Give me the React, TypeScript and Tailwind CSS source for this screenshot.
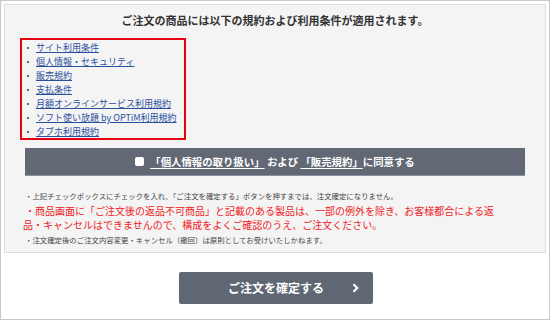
const FONT = "font-['Noto_Sans_CJK_JP','Noto_Sans',sans-serif]";

const terms = [
  "サイト利用条件",
  "個人情報・セキュリティ",
  "販売規約",
  "支払条件",
  "月額オンラインサービス利用規約",
  "ソフト使い放題 by OPTiM利用規約",
  "タブホ利用規約",
];

export default function App() {
  return (
    <div
      className={`${FONT} w-[550px] h-[320px] border border-[#c8c8c8] bg-white pt-[3px] px-[3px] overflow-hidden`}
    >
      <div className="h-[249px] border border-[#dddddd] bg-[#f4f4f4]">
        <h2 className="pt-[7px] text-center text-[11px] leading-[16px] font-bold text-[#333]">
          ご注文の商品には以下の規約および利用条件が適用されます。
        </h2>

        <div className="mt-[10px] ml-[15px] w-[166px] h-[102px] border-2 border-[#e50012] pl-[5px] pt-[1px]">
          <ul>
            {terms.map((t) => (
              <li key={t} className="flex items-center h-[14px] text-[9px] leading-[14px]">
                <span className="inline-block w-[2px] h-[2px] bg-[#666] mr-[7px]" />
                <a href="#" className="text-[#2a4f9c] underline underline-offset-1 whitespace-nowrap">
                  {t}
                </a>
              </li>
            ))}
          </ul>
        </div>

        <div className="mt-[8px] mx-[20px] h-[28px] bg-[#626975] border-b border-[#8a93a3] flex items-center justify-center">
          <label className="flex items-center gap-[6px] text-[10.4px] font-bold text-white">
            <span className="inline-block w-[9px] h-[9px] rounded-[2px] bg-white" />
            <span>
              <a href="#" className="underline underline-offset-2">「個人情報の取り扱い」</a>
              {" "}および{" "}
              <a href="#" className="underline underline-offset-2">「販売規約」</a>
              に同意する
            </span>
          </label>
        </div>

        <div className="mt-[14px] pl-[20px]">
          <p className="text-[7.4px] leading-[12px] text-[#444] whitespace-nowrap">
            ・上記チェックボックスにチェックを入れ、「ご注文を確定する」ボタンを押すまでは、注文確定になりません。
          </p>
          <p className="mt-[2px] text-[10px] leading-[14px] text-[#ee1c25] whitespace-nowrap -ml-[2px]">
            <span className="ml-[2px]">・商品画面に「ご注文後の返品不可商品」と記載のある製品は、一部の例外を除き、お客様都合による返</span>
            <br />
            品・キャンセルはできませんので、構成をよくご確認のうえ、ご注文ください。
          </p>
          <p className="mt-[2px] text-[7.4px] leading-[12px] text-[#444] whitespace-nowrap">
            ・注文確定後のご注文内容変更・キャンセル（撤回）は原則としてお受けいたしかねます。
          </p>
        </div>
      </div>

      <div className="mt-[19px] flex justify-center pl-[2px]">
        <button className="relative w-[194px] h-[32px] rounded-[2px] bg-[#5f6773] text-white text-[12px] font-bold flex items-center justify-center">
          ご注文を確定する
          <svg
            className="absolute right-[14px] top-1/2 -translate-y-1/2"
            width="7"
            height="10"
            viewBox="0 0 7 10"
            fill="none"
          >
            <path d="M1.5 1.2 L5.2 5 L1.5 8.8" stroke="white" strokeWidth="2.2" />
          </svg>
        </button>
      </div>
    </div>
  );
}
